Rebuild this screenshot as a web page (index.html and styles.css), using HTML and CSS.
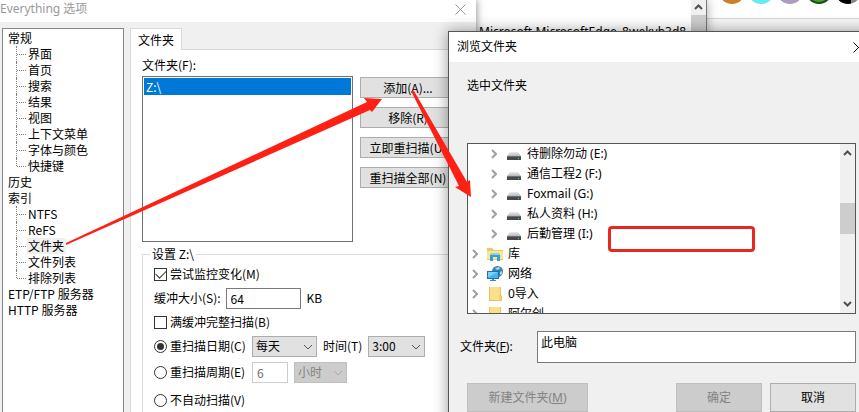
FILE: index.html
```html
<!DOCTYPE html>
<html lang="zh-CN">
<head>
    <meta charset="UTF-8">
    <meta name="viewport" content="width=device-width, initial-scale=1.0">
    <title>Everything 选项</title>
    <link rel="stylesheet" href="styles.css">
</head>
<body>
    <div class="desktop">
        <div class="window palette">
            <div class="swatches">
                <span class="swatch orange"></span>
                <span class="swatch cyan"></span>
                <span class="swatch mauve"></span>
                <span class="swatch green"></span>
                <span class="swatch black"></span>
            </div>
        </div>

        <div class="window packages">
            <div class="package-name">Microsoft.MicrosoftEdge_8wekyb3d8</div>
            <div class="scrollbar">
                <svg class="arrow" viewBox="0 0 9 6"><path d="M1 5l3.500-3.500L8 5"/></svg>
                <div class="thumb"></div>
            </div>
        </div>

        <div class="window options">
            <div class="titlebar">
                <span>Everything 选项</span>
                <button class="close" aria-label="关闭"><svg viewBox="0 0 11 11"><path d="M.5.5l10 10M10.500.5l-10 10"/></svg></button>
            </div>
            <div class="options-body">
                <ul class="nav">
                    <li>常规
                        <ul>
                            <li><span>界面</span></li>
                            <li><span>首页</span></li>
                            <li><span>搜索</span></li>
                            <li><span>结果</span></li>
                            <li><span>视图</span></li>
                            <li><span>上下文菜单</span></li>
                            <li><span>字体与颜色</span></li>
                            <li><span>快捷键</span></li>
                        </ul>
                    </li>
                    <li>历史</li>
                    <li>索引
                        <ul>
                            <li><span>NTFS</span></li>
                            <li><span>ReFS</span></li>
                            <li><span class="selected">文件夹</span></li>
                            <li><span>文件列表</span></li>
                            <li><span>排除列表</span></li>
                        </ul>
                    </li>
                    <li>ETP/FTP 服务器</li>
                    <li>HTTP 服务器</li>
                </ul>

                <div class="tabs">
                    <button class="tab">文件夹</button>
                    <div class="pane">
                        <label for="folders">文件夹(F):</label>
                        <div class="folders">
                            <select id="folders" class="listbox" size="10">
                                <option class="current">Z:\</option>
                            </select>
                            <div class="actions">
                                <button>添加(A)...</button>
                                <button>移除(R)</button>
                                <button>立即重扫描(U)</button>
                                <button>重扫描全部(N)</button>
                            </div>
                        </div>

                        <fieldset>
                            <legend>设置 Z:\</legend>
                            <div class="row">
                                <input type="checkbox" id="monitor" checked>
                                <label for="monitor">尝试监控变化(M)</label>
                            </div>
                            <div class="row">
                                <label for="buffer">缓冲大小(S):</label>
                                <input type="text" id="buffer" class="buffer" value="64">
                                <span>KB</span>
                            </div>
                            <div class="row">
                                <input type="checkbox" id="full">
                                <label for="full">满缓冲完整扫描(B)</label>
                            </div>
                            <div class="row">
                                <input type="radio" name="rescan" id="daily" checked>
                                <label for="daily" class="mode">重扫描日期(C)</label>
                                <span class="combo day">
                                    <select aria-label="日期"><option>每天</option></select>
                                    <svg viewBox="0 0 10 6"><path d="M1 1l4 4 4-4"/></svg>
                                </span>
                                <label for="time">时间(T)</label>
                                <span class="combo time">
                                    <select id="time"><option>3:00</option></select>
                                    <svg viewBox="0 0 10 6"><path d="M1 1l4 4 4-4"/></svg>
                                </span>
                            </div>
                            <div class="row tall">
                                <input type="radio" name="rescan" id="period">
                                <label for="period" class="mode">重扫描周期(E)</label>
                                <input type="text" class="count" aria-label="周期" value="6" disabled>
                                <span class="combo unit">
                                    <select aria-label="单位" disabled><option>小时</option></select>
                                    <svg viewBox="0 0 10 6"><path d="M1 1l4 4 4-4"/></svg>
                                </span>
                            </div>
                            <div class="row tall">
                                <input type="radio" name="rescan" id="never">
                                <label for="never">不自动扫描(V)</label>
                            </div>
                        </fieldset>
                    </div>
                </div>
            </div>
        </div>

        <div class="window browse">
            <div class="titlebar">
                <span>浏览文件夹</span>
                <button class="close" aria-label="关闭"><svg viewBox="0 0 11 11"><path d="M.5.5l10 10M10.500.5l-10 10"/></svg></button>
            </div>
            <div class="browse-body">
                <p>选中文件夹</p>
                <div class="tree">
                    <ul>
                        <li class="drive"><svg class="chevron" viewBox="0 0 6 10"><path d="M1 1l4 4-4 4"/></svg><svg class="icon" viewBox="0 0 16 16"><use href="#disk"/></svg>待删除勿动 (E:)</li>
                        <li class="drive"><svg class="chevron" viewBox="0 0 6 10"><path d="M1 1l4 4-4 4"/></svg><svg class="icon" viewBox="0 0 16 16"><use href="#disk"/></svg>通信工程2 (F:)</li>
                        <li class="drive"><svg class="chevron" viewBox="0 0 6 10"><path d="M1 1l4 4-4 4"/></svg><svg class="icon" viewBox="0 0 16 16"><use href="#disk"/></svg>Foxmail (G:)</li>
                        <li class="drive"><svg class="chevron" viewBox="0 0 6 10"><path d="M1 1l4 4-4 4"/></svg><svg class="icon" viewBox="0 0 16 16"><use href="#disk"/></svg>私人资料 (H:)</li>
                        <li class="drive"><svg class="chevron" viewBox="0 0 6 10"><path d="M1 1l4 4-4 4"/></svg><svg class="icon" viewBox="0 0 16 16"><use href="#disk"/></svg>后勤管理 (I:)</li>
                        <li><svg class="chevron" viewBox="0 0 6 10"><path d="M1 1l4 4-4 4"/></svg><svg class="icon" viewBox="0 0 16 16">
                            <path fill="#f0c95a" d="M0 2h5l2 2h9v10H0z"/>
                            <path fill="#fbe49a" d="M0 5h16v8H0z"/>
                            <path fill="#2fa4d3" d="M3 15V9l2-2h6l2 2v6h-3v-4H6v4z"/>
                            <path fill="#86d3ee" d="M4 8l1-1h6l1 1v1H4z"/>
                        </svg>库</li>
                        <li><svg class="chevron" viewBox="0 0 6 10"><path d="M1 1l4 4-4 4"/></svg><svg class="icon" viewBox="0 0 16 16">
                            <circle cx="10.500" cy="5.500" r="5.500" fill="#3f7fae"/>
                            <path fill="#a9d5ee" d="M8 2l4-1 1 2-3 1zM13 6l2-1v3l-2 1z"/>
                            <path fill="#1d6fb4" d="M0 5h12v8H0z"/>
                            <path fill="#43b5f2" d="M1 6h10v6H1z"/>
                            <path fill="#7fd0fa" d="M1 6h10L1 11z"/>
                            <path fill="#4a87b0" d="M5 13h2v1h2v1H3v-1h2z"/>
                        </svg>网络</li>
                        <li><svg class="chevron" viewBox="0 0 6 10"><path d="M1 1l4 4-4 4"/></svg><svg class="icon" viewBox="0 0 16 16"><use href="#folder"/></svg>0导入</li>
                        <li><svg class="chevron" viewBox="0 0 6 10"><path d="M1 1l4 4-4 4"/></svg><svg class="icon" viewBox="0 0 16 16"><use href="#folder"/></svg>阿尔创</li>
                    </ul>
                    <div class="scrollbar">
                        <svg class="arrow" viewBox="0 0 9 6"><path d="M1 5l3.500-3.500L8 5"/></svg>
                        <div class="track"><div class="thumb"></div></div>
                        <svg class="arrow" viewBox="0 0 9 6"><path d="M1 1l3.500 3.500L8 1"/></svg>
                    </div>
                </div>
                <div class="field">
                    <label for="path">文件夹(<u>F</u>):</label>
                    <textarea id="path" rows="1">此电脑</textarea>
                </div>
                <div class="buttons">
                    <button class="new" disabled>新建文件夹(<u>M</u>)</button>
                    <button disabled>确定</button>
                    <button>取消</button>
                </div>
            </div>
        </div>

        <!-- red marks over the windows -->
        <svg class="marks" width="859" height="412">
            <path d="M66 243L367 102 364 98 382 99 372 112 370 110 66 245z"/>
            <path d="M411 91L414 91 467 182 470 180 471 197 455 187 459 186z"/>
        </svg>
        <div class="mark-box"></div>
    </div>

    <svg width="0" height="0" class="defs">
        <defs>
            <linearGradient id="metal" x1="0" y1="0" x2="0" y2="1">
                <stop offset="0" stop-color="#ececec"/>
                <stop offset="1" stop-color="#b4b8b8"/>
            </linearGradient>
            <symbol id="disk" viewBox="0 0 16 16">
                <path fill="url(#metal)" d="M4 6h8l3 4H1z"/>
                <path fill="#46494b" d="M1 10h14v4H1z"/>
                <path fill="#6c7072" d="M1 10h14v1H1z"/>
                <path fill="#4be070" d="M12 12h1v1h-1z"/>
            </symbol>
            <symbol id="folder" viewBox="0 0 16 16">
                <path fill="#e8c25c" d="M2 1h12v8l1 1v5H2z"/>
                <path fill="#fbe08c" d="M3 1h10v13H3z"/>
                <path fill="#f3d272" d="M12 9l2 1v5h-2z"/>
            </symbol>
        </defs>
    </svg>
</body>
</html>
```

FILE: styles.css
```css
* {
    box-sizing: border-box;
}
body {
    margin: 0;
    font-family: "Noto Sans CJK SC", sans-serif;
    font-size: 12px;
    line-height: 16px;
    color: #000;
}
ul {
    list-style: none;
    margin: 0;
    padding: 0;
}
button, input, select, textarea {
    font: inherit;
    color: inherit;
    margin: 0;
    border-radius: 0;
}
svg {
    display: block;
    fill: none;
}
.desktop {
    position: relative;
    height: 100vh;
    overflow: hidden;
    background: #fff;
}
.window {
    position: absolute;
    background: #fff;
}
.titlebar {
    display: flex;
    align-items: center;
    justify-content: space-between;
    font-family: "Noto Sans", "Noto Sans CJK SC", sans-serif;
    background: #fff;
}
.close {
    padding: 0;
    border: 0;
    background: none;
}
.close svg {
    width: 11px;
    height: 11px;
    stroke: currentColor;
}

/* windows at the back */
.palette {
    top: 0;
    left: 707px;
    right: 0;
    bottom: 0;
    background: #f6f6f6;
}
.swatches {
    display: flex;
    gap: 3px;
    height: 19px;
    padding-left: 12px;
    overflow: hidden;
    background: #fff;
    border-bottom: 1px solid #d8d8d8;
}
.swatch {
    flex: none;
    width: 26px;
    height: 26px;
    margin-top: -22px;
    border-radius: 50%;
}
.orange { background: #c9822b; }
.cyan { background: #65eaf2; }
.mauve { background: #aa9dbd; }
.green { background: #4a9a32; border: 2px solid #1d4d18; }
.black { background: linear-gradient(90deg, #000 60%, #888 60%); }
.packages {
    top: 0;
    left: 470px;
    width: 237px;
    bottom: 0;
    display: flex;
    border-right: 1px solid #777;
    box-shadow: 0 0 10px rgba(0, 0, 0, 0.35);
}
.package-name {
    flex: 1;
    min-width: 0;
    padding: 24px 0 0 9px;
    overflow: hidden;
    white-space: nowrap;
    font-family: "Noto Sans", sans-serif;
}
.scrollbar {
    display: flex;
    flex-direction: column;
    align-items: center;
    width: 15px;
    background: #f0f0f0;
}
.scrollbar .arrow {
    flex: none;
    width: 9px;
    height: 6px;
    margin: 4px 0 5px;
    stroke: #505050;
    stroke-width: 2;
}
.thumb {
    width: 100%;
    height: 31px;
    background: #cdcdcd;
}

/* options window */
.options {
    top: 0;
    left: 0;
    width: 476px;
    bottom: 0;
    background: #f0f0f0;
    box-shadow: 0 0 8px rgba(0, 0, 0, 0.5);
}
.options .titlebar {
    height: 22px;
    padding: 0 10px 4px 0;
    color: #999;
}
.options-body {
    display: flex;
    gap: 6px;
    height: calc(100% - 22px);
    padding: 6px 0 0 2px;
}
.nav {
    width: 122px;
    flex: none;
    padding: 1px 0 0 5px;
    background: #fff;
    border: 1px solid #828790;
    border-bottom: 0;
}
.nav ul {
    padding-left: 8px;
}
.nav ul li {
    position: relative;
    padding-left: 10px;
    border-left: 1px dotted #808080;
}
.nav ul li::before {
    content: "";
    position: absolute;
    left: 0;
    top: 8px;
    width: 9px;
    border-top: 1px dotted #808080;
}
.nav ul li:last-child {
    border-left-color: transparent;
}
.nav ul li:last-child::after {
    content: "";
    position: absolute;
    left: -1px;
    top: 0;
    height: 8px;
    border-left: 1px dotted #808080;
}
.nav span {
    display: inline-block;
    padding: 0 2px 0 1px;
}
.nav .selected {
    background: #f0f0f0;
}
.tabs {
    flex: 1;
    display: flex;
    flex-direction: column;
    align-items: flex-start;
}
.tab {
    flex: none;
    z-index: 1;
    height: 22px;
    padding: 0 7px;
    background: #fff;
    border: 1px solid #d9d9d9;
    border-bottom: 0;
}
.pane {
    flex: 1;
    align-self: stretch;
    margin-top: -1px;
    padding: 7px 10px 0 11px;
    background: #fff;
    border: 1px solid #d9d9d9;
}
.folders {
    display: flex;
    gap: 7px;
    padding-top: 3px;
}
.listbox {
    width: 211px;
    height: 166px;
    padding: 1px;
    overflow: hidden;
    background: #fff;
    border: 1px solid #707070;
    outline: 0;
}
.listbox option {
    min-height: 13px;
    padding: 0 2px;
    line-height: 13px;
}
.listbox .current {
    background: #0078d7;
    color: #fff;
}
.actions {
    display: flex;
    flex-direction: column;
    gap: 9px;
    padding-top: 1px;
}
.actions button {
    width: 96px;
    height: 21px;
    padding: 0;
    background: #e1e1e1;
    border: 1px solid #adadad;
    white-space: nowrap;
}
fieldset {
    min-width: 0;
    margin: 4px 0 0;
    padding: 0 0 0 11px;
    border: 1px solid #dcdcdc;
    border-bottom: 0;
}
legend {
    padding: 0 2px;
    margin-left: -4px;
}
.row {
    display: flex;
    align-items: center;
    gap: 3px;
    height: 24px;
    white-space: nowrap;
}
.row.tall {
    height: 28px;
}
.row input[type="checkbox"], .row input[type="radio"] {
    appearance: none;
    flex: none;
    display: grid;
    place-items: center;
    width: 13px;
    height: 13px;
    background: #fff;
    border: 1px solid #333;
}
.row input[type="radio"] {
    border-radius: 50%;
}
.row input[type="radio"]:checked::before {
    content: "";
    width: 7px;
    height: 7px;
    border-radius: 50%;
    background: #333;
}
.row input[type="checkbox"]:checked::before {
    content: "";
    width: 9px;
    height: 5px;
    margin-bottom: 3px;
    border-left: 1px solid #333;
    border-bottom: 1px solid #333;
    transform: rotate(-45deg);
}
.row input[type="text"] {
    height: 21px;
    padding: 0 4px;
    background: #fff;
    border: 1px solid #7a7a7a;
}
.row .buffer {
    width: 75px;
    margin: 0 3px 0 2px;
}
.row .count {
    width: 36px;
    margin-right: 3px;
}
.row .count:disabled {
    color: #6d6d6d;
    border-color: #ccc;
}
.mode {
    width: 79px;
}
.combo {
    position: relative;
    display: flex;
}
.combo select {
    appearance: none;
    width: 100%;
    height: 21px;
    padding: 0 3px;
    background: #e1e1e1;
    border: 1px solid #adadad;
    opacity: 1;
}
.combo svg {
    position: absolute;
    right: 4px;
    top: 8px;
    width: 10px;
    height: 6px;
    stroke: #555;
    pointer-events: none;
}
.day {
    width: 65px;
    margin-right: 3px;
}
.time {
    width: 57px;
    margin-left: 3px;
}
.unit {
    width: 53px;
}
.unit select {
    background: #ccc;
    border-color: #bfbfbf;
    color: #838383;
}
.unit svg {
    stroke: #aaa;
}

/* folder browser */
.browse {
    top: 31px;
    left: 448px;
    right: -16px;
    bottom: -20px;
    background: #f0f0f0;
    border: 1px solid #555;
    box-shadow: 0 0 14px rgba(0, 0, 0, 0.4);
    font-family: "Noto Sans", "Noto Sans CJK SC", sans-serif;
}
.browse .titlebar {
    height: 30px;
    padding: 0 10px 0 8px;
}
.browse-body {
    padding: 16px 18px 0;
}
.browse p {
    margin: 0;
    height: 65px;
}
.tree {
    display: flex;
    height: 171px;
    overflow: hidden;
    background: #fff;
    border: 1px solid #555;
}
.tree ul {
    flex: 1;
}
.tree li {
    display: flex;
    align-items: center;
    height: 20px;
    padding-left: 4px;
}
.tree .drive {
    padding-left: 23px;
}
.chevron {
    width: 6px;
    height: 10px;
    margin-right: 9px;
    stroke: #a0a0a0;
    stroke-width: 2;
}
.icon {
    width: 16px;
    height: 16px;
    margin-right: 5px;
}
.tree .scrollbar .arrow {
    margin: 6px 0;
}
.track {
    flex: 1;
    width: 100%;
    padding-top: 41px;
}
.field {
    display: flex;
    align-items: center;
    justify-content: space-between;
    margin: 17px 0 20px -7px;
}
.field textarea {
    width: calc(100% - 77px);
    height: 32px;
    padding: 3px;
    resize: none;
    overflow: hidden;
    border: 1px solid #7a7a7a;
}
.buttons {
    display: flex;
    gap: 8px;
}
.buttons button {
    width: 86px;
    height: 29px;
    padding: 0;
    background: #e1e1e1;
    border: 1px solid #adadad;
}
.buttons button:disabled {
    background: #ccc;
    border-color: #bfbfbf;
    color: #838383;
}
.buttons .new {
    width: 121px;
    margin-right: auto;
}

.marks {
    position: absolute;
    top: 0;
    left: 0;
    fill: #ff2015;
    pointer-events: none;
}
.mark-box {
    position: absolute;
    top: 226px;
    left: 608px;
    width: 147px;
    height: 26px;
    border: 3px solid #e8281e;
    border-radius: 4px;
}
.defs {
    position: absolute;
}
```
